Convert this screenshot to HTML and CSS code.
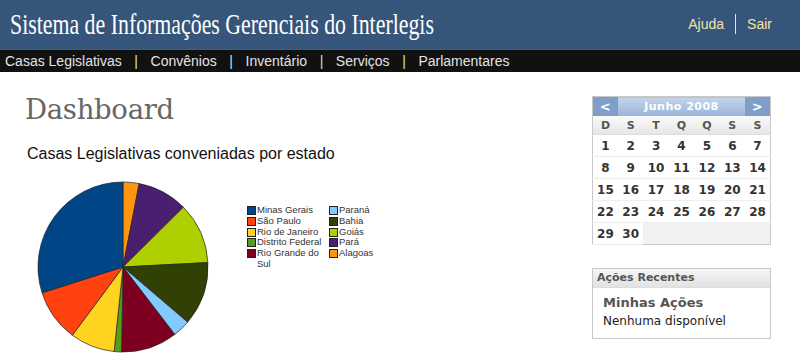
FILE: index.html
```html
<!DOCTYPE html>
<html lang="pt-BR">
<head>
  <meta charset="UTF-8">
  <title>Dashboard - SIGI</title>
  <link rel="stylesheet" href="styles.css">
</head>
<body>
  <header class="topo">
    <h1 class="titulo">Sistema de Informações Gerenciais do Interlegis</h1>
    <div class="links">
      <a href="#">Ajuda</a>
      <span class="sep"></span>
      <a href="#">Sair</a>
    </div>
  </header>

  <nav class="menu">
    <a href="#">Casas Legislativas</a><span>|</span>
    <a href="#">Convênios</a><span>|</span>
    <a href="#">Inventário</a><span>|</span>
    <a href="#">Serviços</a><span>|</span>
    <a href="#">Parlamentares</a>
  </nav>

  <div class="pagina">
    <main class="conteudo">
      <h2 class="dashboard">Dashboard</h2>
      <h3 class="grafico-titulo">Casas Legislativas conveniadas por estado</h3>

      <div class="grafico">
        <svg class="pizza" width="172" height="172" viewBox="0 0 172 172">
          <g stroke="#222" stroke-width="0.7" stroke-linejoin="round">
            <path fill="#ff950e" d="M86 86 L86 1 A85 85 0 0 1 102.22 2.56 Z"/>
            <path fill="#4b1f6f" d="M86 86 L102.22 2.56 A85 85 0 0 1 146.42 26.21 Z"/>
            <path fill="#aecf00" d="M86 86 L146.42 26.21 A85 85 0 0 1 170.88 81.55 Z"/>
            <path fill="#314004" d="M86 86 L170.88 81.55 A85 85 0 0 1 150.63 141.2 Z"/>
            <path fill="#83caff" d="M86 86 L150.63 141.2 A85 85 0 0 1 137.75 153.44 Z"/>
            <path fill="#7e0021" d="M86 86 L137.75 153.44 A85 85 0 0 1 84.52 170.99 Z"/>
            <path fill="#579d1c" d="M86 86 L84.52 170.99 A85 85 0 0 1 77.12 170.53 Z"/>
            <path fill="#ffd320" d="M86 86 L77.12 170.53 A85 85 0 0 1 35.32 154.24 Z"/>
            <path fill="#ff420e" d="M86 86 L35.32 154.24 A85 85 0 0 1 5.02 111.84 Z"/>
            <path fill="#004586" d="M86 86 L5.02 111.84 A85 85 0 0 1 86 1 Z"/>
          </g>
        </svg>

        <ul class="legenda">
          <li><i style="background:#004586"></i>Minas Gerais</li>
          <li><i style="background:#83caff"></i>Paraná</li>
          <li><i style="background:#ff420e"></i>São Paulo</li>
          <li><i style="background:#314004"></i>Bahia</li>
          <li><i style="background:#ffd320"></i>Rio de Janeiro</li>
          <li><i style="background:#aecf00"></i>Goiás</li>
          <li><i style="background:#579d1c"></i>Distrito Federal</li>
          <li><i style="background:#4b1f6f"></i>Pará</li>
          <li><i style="background:#7e0021"></i>Rio Grande do Sul</li>
          <li><i style="background:#ff950e"></i>Alagoas</li>
        </ul>
      </div>
    </main>

    <aside class="lateral">
      <table class="calendario">
        <thead>
          <tr class="mes">
            <th class="seta">&lt;</th>
            <th colspan="5">Junho 2008</th>
            <th class="seta">&gt;</th>
          </tr>
          <tr class="dias-semana">
            <th>D</th><th>S</th><th>T</th><th>Q</th><th>Q</th><th>S</th><th>S</th>
          </tr>
        </thead>
        <tbody>
          <tr><td>1</td><td>2</td><td>3</td><td>4</td><td>5</td><td>6</td><td>7</td></tr>
          <tr><td>8</td><td>9</td><td>10</td><td>11</td><td>12</td><td>13</td><td>14</td></tr>
          <tr><td>15</td><td>16</td><td>17</td><td>18</td><td>19</td><td>20</td><td>21</td></tr>
          <tr><td>22</td><td>23</td><td>24</td><td>25</td><td>26</td><td>27</td><td>28</td></tr>
          <tr><td>29</td><td>30</td><td class="vazio" colspan="5"></td></tr>
        </tbody>
      </table>

      <div class="caixa">
        <div class="caixa-titulo">Ações Recentes</div>
        <div class="caixa-corpo">
          <h4>Minhas Ações</h4>
          <p>Nenhuma disponível</p>
        </div>
      </div>
    </aside>
  </div>
</body>
</html>
```

FILE: styles.css
```css
body {
  margin: 0;
  padding: 0;
  background: #fff;
  font-family: "Liberation Sans", Arial, sans-serif;
  color: #222;
}

.topo {
  height: 49px;
  background: #36557a;
  border-bottom: 1px solid #56595e;
  display: flex;
  align-items: center;
  justify-content: space-between;
}
.titulo {
  margin: 0 0 2px 10px;
  font-family: "Liberation Serif", "Times New Roman", serif;
  font-weight: normal;
  font-size: 30px;
  color: #fff;
  white-space: nowrap;
  transform: scaleX(0.728);
  transform-origin: left center;
}
.links {
  display: flex;
  align-items: center;
  margin-right: 28px;
  margin-bottom: 2px;
  font-size: 14px;
}
.links a {
  color: #f2e3a4;
  text-decoration: none;
}
.links .sep {
  width: 1px;
  height: 20px;
  background: #f2e3a4;
  margin: 0 11px;
}

.menu {
  height: 22px;
  background: #111;
  display: flex;
  align-items: center;
  padding-left: 5px;
  font-size: 14px;
  color: #ddd;
}
.menu a {
  color: #e4e4e4;
  text-decoration: none;
}
.menu span {
  margin: 0 12.6px;
}

.pagina {
  display: flex;
  justify-content: space-between;
}
.conteudo {
  padding-left: 25px;
}
.dashboard {
  margin: 21px 0 0 0;
  font-family: "DejaVu Serif", Georgia, serif;
  font-weight: normal;
  font-size: 27.5px;
  color: #666;
  letter-spacing: -0.3px;
}
.grafico-titulo {
  margin: 20px 0 0 2px;
  font-weight: normal;
  font-size: 16px;
  color: #111;
}
.grafico {
  display: flex;
  align-items: flex-start;
  margin-top: 18px;
  margin-left: 12px;
}
.legenda {
  list-style: none;
  margin: 24px 0 0 38px;
  padding: 0;
  display: grid;
  grid-template-columns: 82px 60px;
  font-size: 9.5px;
  line-height: 10.8px;
  color: #333;
}
.legenda li {
  display: flex;
  align-items: flex-start;
  width: 80px;
}
.legenda i {
  flex: none;
  width: 7px;
  height: 7px;
  border: 1px solid #222;
  margin: 1px 1px 0 0;
}

.lateral {
  width: 179px;
  margin: 24px 29px 0 0;
  font-family: "DejaVu Sans", Verdana, sans-serif;
}
.calendario {
  width: 179px;
  border-collapse: collapse;
  border: 1px solid #c8c8c8;
  table-layout: fixed;
}
.calendario .mes th {
  height: 19px;
  padding: 0;
  background: linear-gradient(#c3d5ea, #99b4d8);
  color: #fff;
  font-size: 11px;
  font-weight: bold;
  letter-spacing: 0.5px;
}
.calendario .mes .seta {
  background: #7f9fc9;
  font-size: 13px;
}
.dias-semana th {
  height: 18px;
  padding: 0;
  background: linear-gradient(#fafafa, #e6e6e6);
  color: #555;
  font-size: 11px;
  font-weight: bold;
  border-bottom: 1px solid #ddd;
}
.calendario td {
  height: 21px;
  padding: 0;
  text-align: center;
  font-size: 12px;
  font-weight: bold;
  color: #333;
  border-bottom: 1px solid #eee;
}
.calendario td.vazio {
  background: #f2f2f2;
  border-bottom: none;
}

.caixa {
  margin-top: 23px;
  border: 1px solid #c8c8c8;
}
.caixa-titulo {
  height: 18px;
  line-height: 18px;
  padding-left: 4px;
  background: linear-gradient(#f6f6f6, #e2e2e2);
  border-bottom: 1px solid #ddd;
  color: #555;
  font-size: 11px;
  font-weight: bold;
}
.caixa-corpo {
  padding: 6px 10px 8px 10px;
}
.caixa-corpo h4 {
  margin: 0;
  font-size: 13px;
  color: #555;
  line-height: 17px;
}
.caixa-corpo p {
  margin: 2px 0 0 0;
  font-size: 12px;
  color: #222;
  line-height: 17px;
}
```
